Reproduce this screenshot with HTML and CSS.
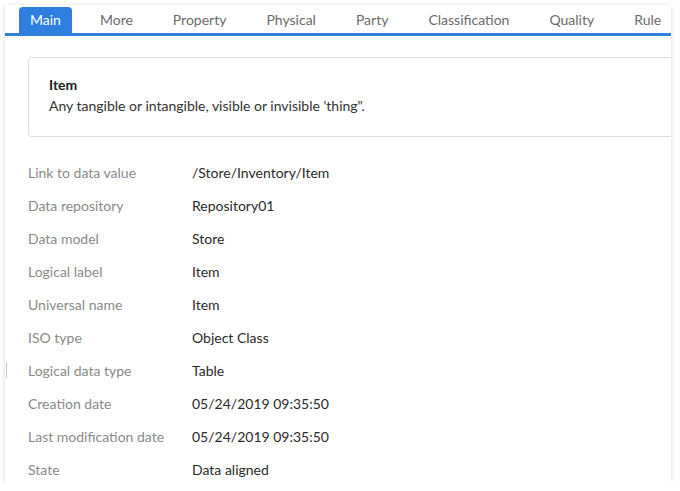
FILE: index.html
```html
<!DOCTYPE html>
<html>
<head>
<meta charset="utf-8">
<link rel="stylesheet" href="styles.css">
</head>
<body>
<div class="card">
  <div class="tabs">
    <div class="tab active">Main</div>
    <div class="tab">More</div>
    <div class="tab">Property</div>
    <div class="tab">Physical</div>
    <div class="tab">Party</div>
    <div class="tab">Classification</div>
    <div class="tab">Quality</div>
    <div class="tab">Rule</div>
  </div>
  <div class="content">
    <div class="info">
      <div class="info-title">Item</div>
      <div class="info-desc">Any tangible or intangible, visible or invisible 'thing".</div>
    </div>
    <div class="rows">
      <div class="row"><span class="label">Link to data value</span><span class="value">/Store/Inventory/Item</span></div>
      <div class="row"><span class="label">Data repository</span><span class="value">Repository01</span></div>
      <div class="row"><span class="label">Data model</span><span class="value">Store</span></div>
      <div class="row"><span class="label">Logical label</span><span class="value">Item</span></div>
      <div class="row"><span class="label">Universal name</span><span class="value">Item</span></div>
      <div class="row"><span class="label">ISO type</span><span class="value">Object Class</span></div>
      <div class="row"><span class="label">Logical data type</span><span class="value">Table</span></div>
      <div class="row"><span class="label">Creation date</span><span class="value">05/24/2019 09:35:50</span></div>
      <div class="row"><span class="label">Last modification date</span><span class="value">05/24/2019 09:35:50</span></div>
      <div class="row"><span class="label">State</span><span class="value">Data aligned</span></div>
    </div>
  </div>
  <div class="handle"></div>
</div>
</body>
</html>
```

FILE: styles.css
```css
html, body {
  margin: 0;
  padding: 0;
  background: #fff;
}
body {
  font-family: Lato, "Open Sans", sans-serif;
  padding: 5px 0 0 5px;
}
.card {
  position: relative;
  width: 666px;
  height: 477px;
  background: #fff;
  box-shadow: 0 1px 5px rgba(0, 0, 0, 0.16);
  overflow: hidden;
}
.tabs {
  display: flex;
  gap: 18px;
  padding: 2px 0 0 14px;
  border-bottom: 3px solid #2f7fe0;
  height: 26px;
}
.tab {
  padding: 0 11px;
  height: 26px;
  line-height: 25px;
  font-size: 14px;
  color: #6b6b6b;
  white-space: nowrap;
}
.tab.active {
  background: #2f7fe0;
  color: #fff;
  border-radius: 4px 4px 0 0;
  margin-right: -1px;
}
.content {
  padding: 21px 0 0 23px;
}
.info {
  margin-right: -40px;
  border: 1px solid #dedede;
  border-radius: 3px;
  padding: 17px 20px 21px 20px;
  height: 40px;
}
.info-title {
  font-size: 14px;
  font-weight: bold;
  color: #222;
  line-height: 20px;
}
.info-desc {
  font-size: 14px;
  color: #333;
  line-height: 22px;
}
.rows {
  padding-top: 19px;
}
.row {
  display: flex;
  height: 33px;
  align-items: center;
  font-size: 14px;
}
.label {
  width: 164px;
  color: #8a8a8a;
}
.value {
  color: #2a2a2a;
}
.handle {
  position: absolute;
  left: 1px;
  top: 357px;
  width: 1px;
  height: 16px;
  background: #c8c8c8;
}
```
